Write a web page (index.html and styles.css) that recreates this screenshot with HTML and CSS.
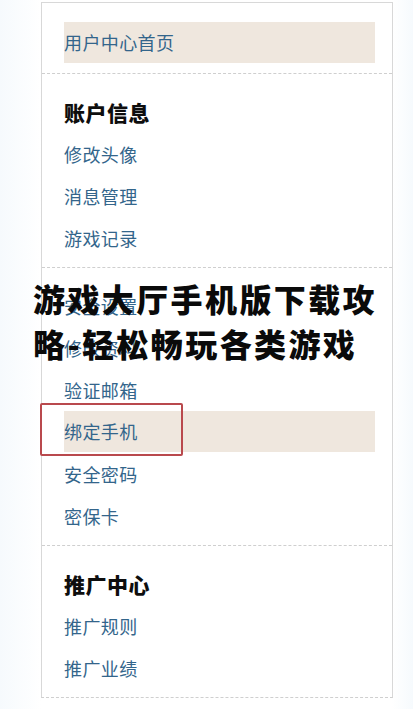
FILE: index.html
```html
<!DOCTYPE html>
<html lang="zh-CN">
<head>
<meta charset="utf-8">
<title>游戏大厅手机版下载攻略-轻松畅玩各类游戏</title>
<link rel="stylesheet" href="styles.css">
</head>
<body>
<div class="page">
  <nav class="panel">
    <section class="group group-top">
      <a class="item active" href="#">用户中心首页</a>
    </section>
    <section class="group">
      <h3 class="heading">账户信息</h3>
      <a class="item" href="#">修改头像</a>
      <a class="item" href="#">消息管理</a>
      <a class="item" href="#">游戏记录</a>
    </section>
    <section class="group">
      <a class="item" href="#">安全设置</a>
      <a class="item" href="#">修改资料</a>
      <a class="item" href="#">验证邮箱</a>
      <a class="item active marked" href="#">绑定手机<span class="mark"></span></a>
      <a class="item" href="#">安全密码</a>
      <a class="item" href="#">密保卡</a>
    </section>
    <section class="group">
      <h3 class="heading">推广中心</h3>
      <a class="item" href="#">推广规则</a>
      <a class="item" href="#">推广业绩</a>
    </section>
  </nav>
  <h1 class="title">游戏大厅手机版下载攻略-轻松畅玩各类游戏</h1>
</div>
</body>
</html>
```
FILE: styles.css
```css
* { box-sizing: border-box; }
html, body {
  margin: 0;
  padding: 0;
  background: #ffffff;
}
body {
  font-family: "Noto Sans CJK SC", "Noto Sans", sans-serif;
  width: 413px;
  height: 709px;
  overflow: hidden;
}
.page {
  position: relative;
  height: 709px;
  padding-top: 2px;
  background: linear-gradient(to right, #f6fafd 0, #ffffff 41px, #ffffff 392px, #f6fafd 413px);
}
.panel {
  margin-left: 41px;
  width: 352px;
  background: #ffffff;
  border-left: 1px solid #d8d8d8;
  border-right: 1px solid #d8d8d8;
  border-top: 1px solid #d8d8d8;
  border-bottom: 1px dashed #cfcfcf;
  display: flex;
  flex-direction: column;
}
.group {
  display: flex;
  flex-direction: column;
  padding: 17px 17px 8px 22px;
  border-bottom: 1px dashed #cfcfcf;
}
.group:last-child { border-bottom: none; }
.group-top { padding-top: 19px; padding-bottom: 9px; }
.heading {
  margin: 0;
  height: 42px;
  line-height: 42px;
  font-size: 21px;
  font-weight: 900;
  color: #0e0e0e;
  letter-spacing: 0.5px;
}
.item {
  display: block;
  height: 42px;
  line-height: 42px;
  font-size: 18px;
  color: #33658b;
  text-decoration: none;
  letter-spacing: 0.4px;
}
.item.active {
  background: #efe7de;
  height: 41px;
  line-height: 41px;
  margin-bottom: 1px;
}
.marked { position: relative; }
.mark {
  position: absolute;
  left: -24px;
  top: -8px;
  width: 143px;
  height: 53px;
  border: 2px solid #b9494d;
  border-radius: 2px;
}
.title {
  position: absolute;
  left: 33px;
  top: 276px;
  width: 356px;
  margin: 0;
  font-family: "Noto Sans CJK SC", sans-serif;
  font-weight: 900;
  font-size: 32px;
  line-height: 45px;
  letter-spacing: 2.4px;
  color: #0a0a0a;
}
```
